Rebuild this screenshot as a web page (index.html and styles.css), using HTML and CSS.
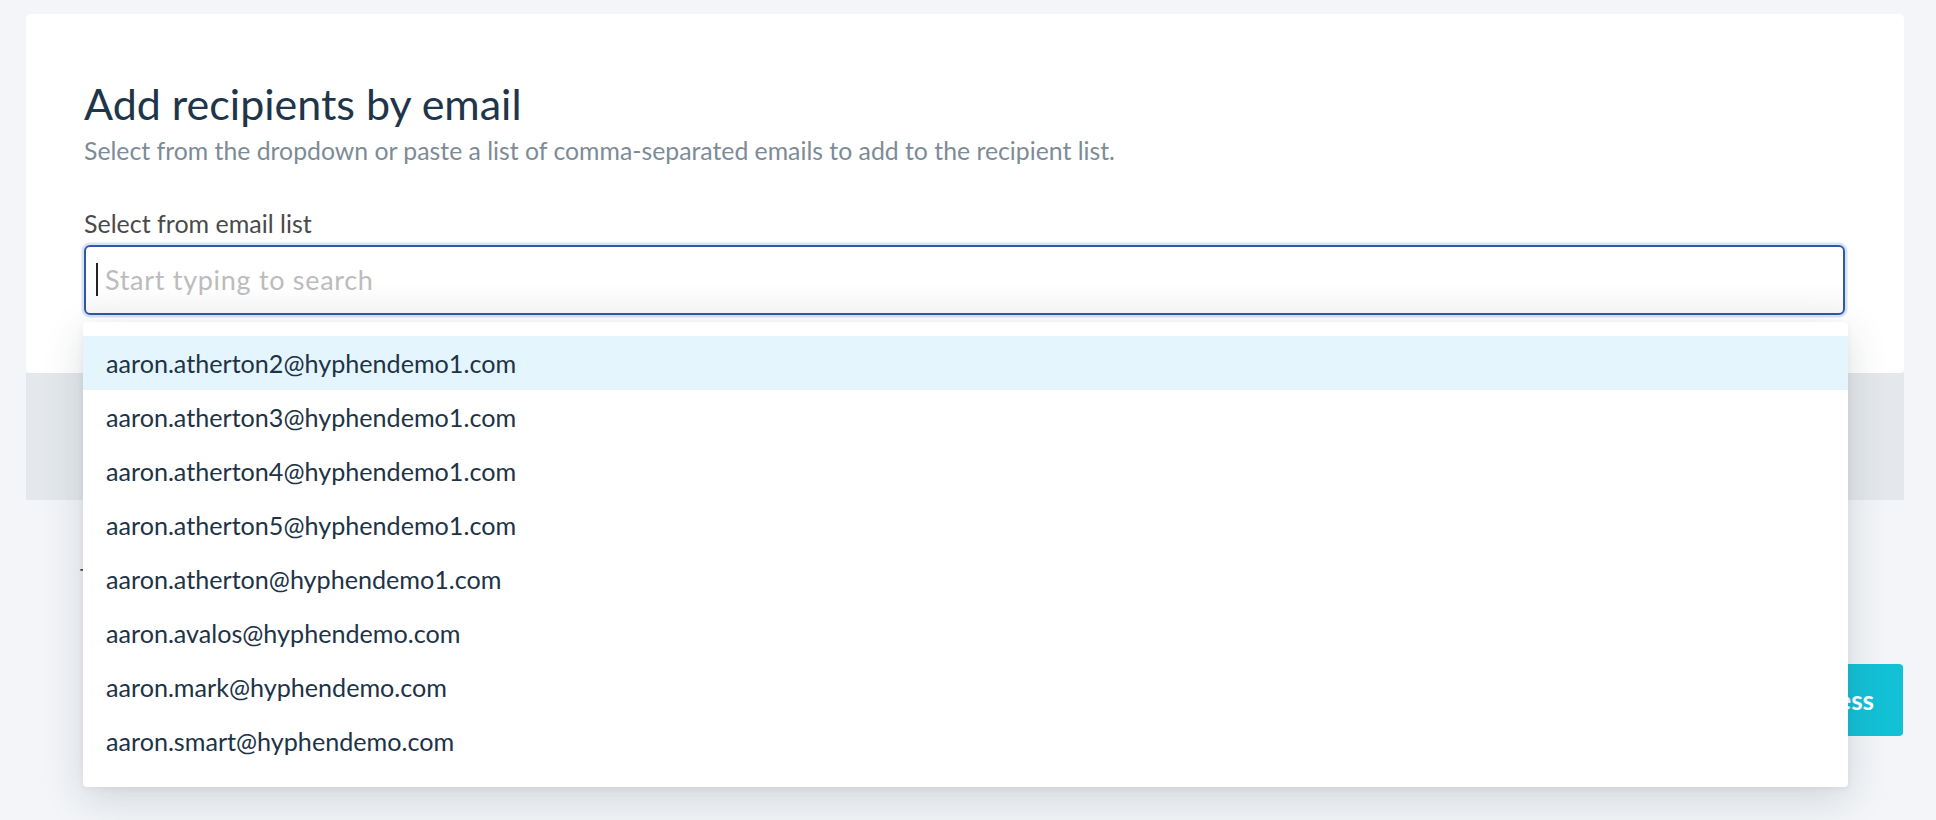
FILE: index.html
```html
<!DOCTYPE html>
<html lang="en">
<head>
<meta charset="utf-8">
<title>Add recipients by email</title>
<link rel="stylesheet" href="styles.css">
</head>
<body>
<div class="page">
  <section class="card">
    <h1 class="title">Add recipients by email</h1>
    <p class="subtitle">Select from the dropdown or paste a list of comma-separated emails to add to the recipient list.</p>
    <label class="label">Select from email list</label>
    <div class="field">
      <div class="control">
        <span class="caret"></span>
        <span class="placeholder">Start typing to search</span>
      </div>
      <ul class="menu">
        <li class="option active">aaron.atherton2@hyphendemo1.com</li>
        <li class="option">aaron.atherton3@hyphendemo1.com</li>
        <li class="option">aaron.atherton4@hyphendemo1.com</li>
        <li class="option">aaron.atherton5@hyphendemo1.com</li>
        <li class="option">aaron.atherton@hyphendemo1.com</li>
        <li class="option">aaron.avalos@hyphendemo.com</li>
        <li class="option">aaron.mark@hyphendemo.com</li>
        <li class="option">aaron.smart@hyphendemo.com</li>
      </ul>
    </div>
  </section>
  <div class="band"></div>
  <section class="lower">
    <p class="summary">To</p>
    <div class="actions">
      <button class="btn">Add email address</button>
    </div>
  </section>
</div>
</body>
</html>
```

FILE: styles.css
```css
* { box-sizing: border-box; }

html, body {
  margin: 0;
  padding: 0;
}

body {
  background: #f3f5f8;
  font-family: Lato, "Noto Sans", sans-serif;
  height: 820px;
  overflow: hidden;
}

.page {
  padding: 14px 32px 0 26px;
}

.card {
  background: #ffffff;
  border-radius: 5px;
  padding: 64px 59px 58px 58px;
}

.title {
  margin: 0;
  font-size: 43px;
  line-height: 52px;
  font-weight: 400;
  color: #1e354a;
}

.subtitle {
  margin: 6px 0 0;
  font-size: 24.8px;
  line-height: 30px;
  color: #7d8b97;
}

.label {
  display: block;
  margin-top: 42px;
  font-size: 25px;
  line-height: 30px;
  color: #4a4a4a;
}

.field {
  position: relative;
  margin-top: 6.7px;
}

.control {
  height: 70px;
  border: 2px solid #3356a6;
  border-radius: 6px;
  box-shadow: 0 0 0 2.5px #d4e4fb;
  background: linear-gradient(#ffffff 55%, #f7f7f7);
  display: flex;
  align-items: center;
  padding-left: 10px;
}

.caret {
  width: 2px;
  height: 33px;
  background: #222;
}

.placeholder {
  margin-left: 7px;
  font-size: 27px;
  letter-spacing: 0.7px;
  color: #bcbcbc;
}

.menu {
  position: absolute;
  top: 77px;
  left: -1px;
  right: -3px;
  margin: 0;
  padding: 14px 0 19px;
  list-style: none;
  background: #ffffff;
  border-radius: 4px;
  box-shadow: 0 12px 40px rgba(40, 50, 70, 0.16), 0 2px 6px rgba(40, 50, 70, 0.06);
  z-index: 10;
}

.option {
  height: 54px;
  line-height: 54px;
  padding-left: 23px;
  font-size: 25.15px;
  color: #1d3346;
}

.option.active {
  background: #e5f5fd;
}

.band {
  height: 127px;
  background: #e4e8ec;
}

.lower {
  padding: 63.5px 0 0 54px;
}

.summary {
  margin: 0;
  font-size: 22px;
  line-height: 26px;
  color: #4a4a4a;
}

.actions {
  display: flex;
  justify-content: flex-end;
  margin-top: 74.5px;
}

.btn {
  height: 72px;
  border: 0;
  border-radius: 4px;
  background: #13c1d7;
  color: #ffffff;
  font-family: Lato, "Noto Sans", sans-serif;
  font-weight: 700;
  font-size: 26px;
  padding: 0 29px;
  margin-right: 1px;
}
```
